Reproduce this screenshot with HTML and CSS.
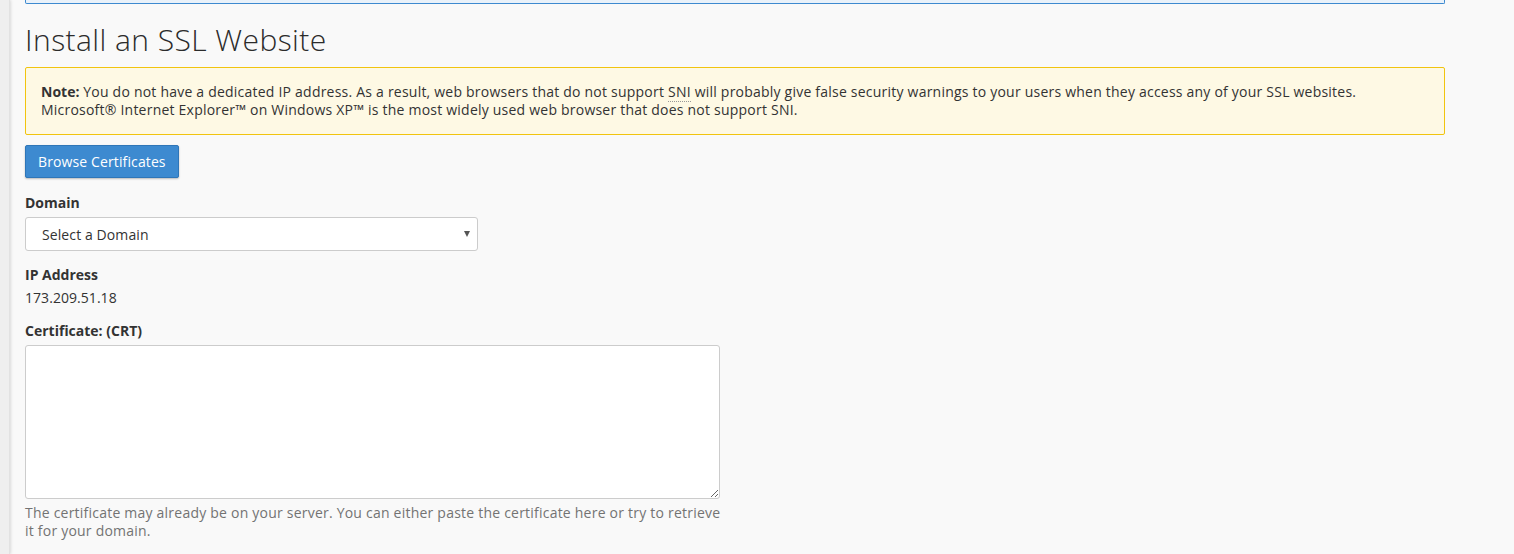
FILE: index.html
```html
<!DOCTYPE html>
<html>
<head>
<meta charset="utf-8">
<link rel="stylesheet" href="styles.css">
</head>
<body>
<div class="layout">
  <div class="sidebar"></div>
  <main class="main">
    <div class="top-box"></div>
    <h1 class="title">Install an SSL Website</h1>
    <div class="alert">
      <strong>Note:</strong> You do not have a dedicated IP address. As a result, web browsers that do not support <abbr class="abbr" title="Server Name Indication">SNI</abbr> will probably give false security warnings to your users when they access any of your SSL websites.<br>
      Microsoft® Internet Explorer™ on Windows XP™ is the most widely used web browser that does not support SNI.
    </div>
    <button class="btn">Browse Certificates</button>
    <div class="group group-domain">
      <label class="label">Domain</label>
      <div class="select">
        <span>Select a Domain</span>
        <span class="caret"></span>
      </div>
    </div>
    <div class="group group-ip">
      <div class="label">IP Address</div>
      <div class="value">173.209.51.18</div>
    </div>
    <div class="group group-cert">
      <label class="label">Certificate: (CRT)</label>
      <textarea class="textarea"></textarea>
      <div class="help">The certificate may already be on your server. You can either paste the certificate here or try to retrieve it for your domain.</div>
    </div>
  </main>
</div>
</body>
</html>
```
FILE: styles.css
```css
html, body {
  margin: 0;
  padding: 0;
  background: #f9f9f9;
  font-family: "Open Sans", "DejaVu Sans", sans-serif;
  font-size: 14px;
  color: #333;
  height: 100%;
  overflow: hidden;
}
.layout {
  display: flex;
  min-height: 554px;
}
.sidebar {
  width: 9px;
  flex: none;
  background: #efefef;
  box-shadow: 1px 0 3px rgba(0,0,0,0.12);
  border-right: 1px solid #e2e2e2;
}
.main {
  flex: none;
  width: 1420px;
  padding-left: 15px;
}
.top-box {
  height: 3px;
  background: #eaf2fa;
  border: 1px solid #3d8ad0;
  border-top: none;
  border-radius: 0 0 2px 2px;
}
.title {
  font-size: 30px;
  font-weight: 300;
  line-height: 36px;
  margin: 18px 0 9px;
  color: #2b2b2b;
  letter-spacing: 0.43px;
}
.alert {
  background: #fef9e4;
  border: 1px solid #f1c40f;
  border-radius: 2px;
  padding: 15px 15px;
  line-height: 18px;
  color: #333;
  letter-spacing: 0.22px;
}
.alert strong { font-weight: 700; letter-spacing: 0; }
.abbr {
  text-decoration: none;
  border-bottom: 1px dotted #999;
}
.btn {
  display: block;
  margin-top: 10px;
  height: 33px;
  padding: 0 12px;
  background: #3d8ad0;
  border: 1px solid #2f76b8;
  border-radius: 2px;
  color: #fff;
  font-family: inherit;
  font-size: 14px;
  letter-spacing: 0.12px;
  box-shadow: 0 1px 2px rgba(0,0,0,0.25);
}
.group {
  margin-top: 15px;
}
.group-ip {
  margin-top: 14px;
}
.group-cert {
  margin-top: 13px;
}
.label {
  display: block;
  font-weight: 700;
  line-height: 20px;
  margin-bottom: 4px;
}
.select {
  box-sizing: border-box;
  width: 453px;
  height: 34px;
  background: #fff;
  border: 1px solid #ccc;
  border-radius: 3px;
  display: flex;
  align-items: center;
  justify-content: space-between;
  padding: 0 7px 0 16px;
  color: #333;
  letter-spacing: 0.1px;
}
.caret {
  width: 0;
  height: 0;
  border-left: 3px solid transparent;
  border-right: 3px solid transparent;
  border-top: 6px solid #555;
}
.value {
  line-height: 20px;
  margin-top: -1px;
  letter-spacing: 0.05px;
}
.textarea {
  display: block;
  box-sizing: border-box;
  width: 695px;
  height: 154px;
  margin: 0;
  background: #fff;
  border: 1px solid #ccc;
  border-radius: 3px;
  font-family: inherit;
}
.help {
  width: 700px;
  margin-top: 5px;
  line-height: 18px;
  color: #737373;
  letter-spacing: 0.22px;
}
```
